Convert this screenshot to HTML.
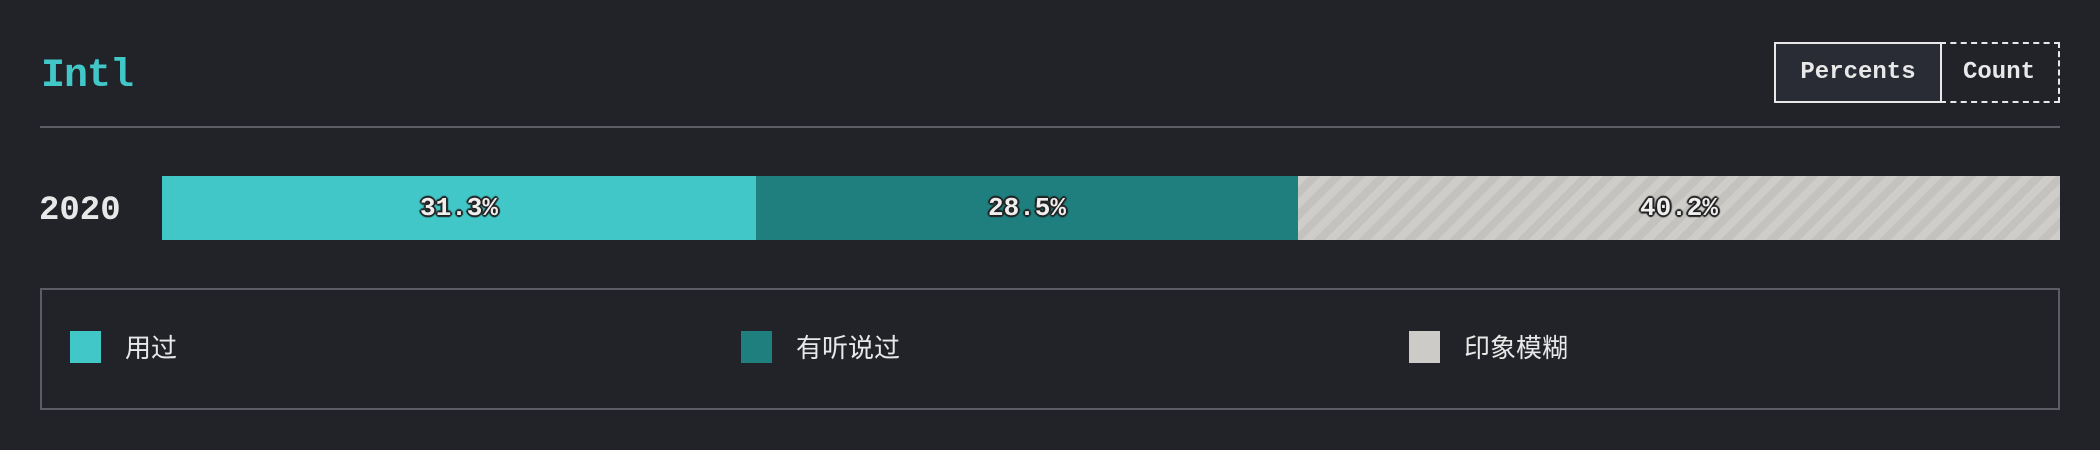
<!DOCTYPE html>
<html><head><meta charset="utf-8"><style>
*{margin:0;padding:0;box-sizing:border-box}
body{width:2100px;height:450px;background:#222328;position:relative;overflow:hidden;font-family:"Liberation Mono","Noto Sans CJK SC",monospace;color:#e8e8e8}
.title{position:absolute;left:41px;top:54px;font-size:40px;font-weight:bold;color:#41c7c7;letter-spacing:-1px}
.hr{position:absolute;left:40px;top:126px;width:2020px;height:2px;background:#5a5d63}
.btn{position:absolute;top:42px;height:61px;font-size:24px;font-weight:bold;display:flex;align-items:center;justify-content:center;color:#e8e8e8}
.b1{left:1774px;width:168px;border:2px solid #e8e8e8;background:#292c35}
.b2{left:1940px;width:120px;border:2px dashed #e8e8e8;border-left:none}
.year{position:absolute;left:39px;top:192px;font-size:34px;font-weight:bold}
.bar{position:absolute;top:176px;height:64px;display:flex;align-items:center;justify-content:center;font-size:26px;font-weight:bold;color:#eee;text-shadow:0 0 2px #222,1px 1px 1px #222,-1px -1px 1px #222,1px -1px 1px #222,-1px 1px 1px #222,2px 0 1px #222,-2px 0 1px #222,0 2px 1px #222,0 -2px 1px #222}
.s1{left:162px;width:594px;background:#41c7c7}
.s2{left:756px;width:542px;background:#1e7f7e}
.s3{left:1298px;width:762px;background:repeating-linear-gradient(135deg,#cfcdc9 0 8px,#c4c2be 8px 16px)}
.leg{position:absolute;left:40px;top:288px;width:2020px;height:122px;border:2px solid #5a5d63}
.it{position:absolute;top:38px;display:flex;align-items:center;font-family:"Liberation Sans","Noto Sans CJK SC",sans-serif;font-size:26px;color:#e8e8e8}
.sw{width:31px;height:32px;margin-right:24px}
</style></head><body>
<div class="title">Intl</div>
<div class="btn b1">Percents</div><div class="btn b2">Count</div>
<div class="hr"></div>
<div class="year">2020</div>
<div class="bar s1">31.3%</div>
<div class="bar s2">28.5%</div>
<div class="bar s3">40.2%</div>
<div class="leg">
<div class="it" style="left:28px"><div class="sw" style="background:#41c7c7"></div>用过</div>
<div class="it" style="left:699px"><div class="sw" style="background:#1e7f7e"></div>有听说过</div>
<div class="it" style="left:1367px"><div class="sw" style="background:#cccbc7"></div>印象模糊</div>
</div>
</body></html>
